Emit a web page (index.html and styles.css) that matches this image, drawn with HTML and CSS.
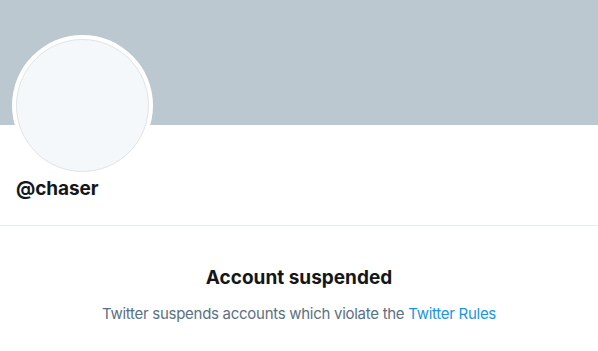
FILE: index.html
```html
<!DOCTYPE html>
<html>
<head>
<meta charset="utf-8">
<link rel="stylesheet" href="styles.css">
</head>
<body>
<div class="profile">
  <div class="banner"></div>
  <div class="head">
    <div class="avatar"><div class="avatar-inner"></div></div>
    <div class="handle">@chaser</div>
  </div>
  <div class="notice">
    <div class="title">Account suspended</div>
    <div class="desc">Twitter suspends accounts which violate the <a href="#" class="link">Twitter Rules</a></div>
  </div>
</div>
</body>
</html>
```
FILE: styles.css
```css
html, body { margin: 0; padding: 0; background: #fff; }
body { font-family: Inter, "Liberation Sans", sans-serif; }
.profile { width: 598px; }
.banner { height: 125px; background: #bbc8d0; }
.head {
  padding: 0 16px;
  height: 100px;
  border-bottom: 1px solid #e6ecf0;
  position: relative;
}
.avatar {
  position: absolute;
  left: 12px;
  top: -90px;
  width: 141px;
  height: 141px;
  border-radius: 50%;
  background: #fff;
  padding: 4px;
  box-sizing: border-box;
}
.avatar-inner {
  width: 100%;
  height: 100%;
  border-radius: 50%;
  background: #f5f8fa;
  border: 1px solid #e1e4e8;
  box-sizing: border-box;
}
.handle {
  padding-top: 52px;
  font-size: 19px;
  font-weight: 700;
  color: #14171a;
  line-height: 24px;
  letter-spacing: -0.1px;
}
.notice { text-align: center; padding-top: 40px; }
.title {
  font-size: 19px;
  font-weight: 700;
  color: #14171a;
  line-height: 24px;
}
.desc {
  margin-top: 14px;
  font-size: 15px;
  color: #5b7083;
  line-height: 20px;
  letter-spacing: -0.28px;
}
.link { color: #1b95e0; text-decoration: none; }
```
